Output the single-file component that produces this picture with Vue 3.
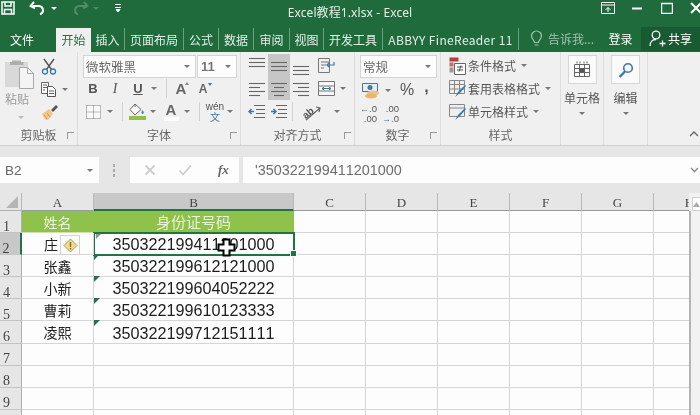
<script setup>
const tabs = [
  { t: '插入', c: 'w34' }, { t: '页面布局', c: 'w59' }, { t: '公式', c: 'w35' }, { t: '数据', c: 'w35' },
  { t: '审阅', c: 'w36' }, { t: '视图', c: 'w34' }, { t: '开发工具', c: 'w59' }, { t: 'ABBYY FineReader 11', c: 'w136' }
]
const cols = ['A', 'B', 'C', 'D', 'E', 'F', 'G', 'H']
const people = [
  ['姓名', '身份证号码'],
  ['庄', '350322199411201000'],
  ['张鑫', '350322199612121000'],
  ['小新', '350322199604052222'],
  ['曹莉', '350322199610123333'],
  ['凌熙', '350322199712151111'],
  ['', ''], ['', ''], ['', ''], ['', '']
]
const rows = people.map((p, i) => ({ n: i + 1, a: p[0], b: p[1], label: i < 9 ? i + 1 : '' }))
const alignIcons = [
  { on: false, l: [[1, 17, 2], [1, 17, 6], [1, 17, 10]] },
  { on: true, l: [[1, 17, 6], [1, 17, 10], [1, 17, 14]] },
  { on: false, l: [[1, 17, 10], [1, 17, 14], [1, 17, 18]] },
  { on: false, l: [[1, 17, 4], [1, 12, 8], [1, 17, 12], [1, 12, 16]] },
  { on: true, l: [[1, 17, 4], [4, 14, 8], [1, 17, 12], [4, 14, 16]] },
  { on: false, l: [[1, 17, 4], [6, 17, 8], [1, 17, 12], [6, 17, 16]] }
]
</script>

<template>
  <div class="app">
    <header class="title">
      <div class="qat">
        <svg class="q-save" width="14" height="14" viewBox="0 0 14 14"><path d="M1 1h12v12H1zM4 1v4h6V1M3.5 13V8.500h7V13" fill="none" stroke="#fff" stroke-width="1.500"/></svg>
        <svg class="q-undo" width="18" height="16" viewBox="0 0 18 16"><path d="M5 2 1.500 6 6 8.500M2.500 6H10a4.200 4.200 0 0 1 1 8.200" fill="none" stroke="#fff" stroke-width="2"/></svg>
        <i class="car white"></i>
        <svg class="q-redo" width="18" height="16" viewBox="0 0 18 16"><path d="M13 2l3.500 4L12 8.500M15.500 6H8a4.200 4.200 0 0 0-1 8.200" fill="none" stroke="#4f8c68" stroke-width="2"/></svg>
        <i class="car dim"></i>
        <svg class="q-more" width="8" height="10" viewBox="0 0 8 10"><path d="M1 1.500h6M1 4.500h6M2 6.500h4L4 9z" stroke="#fff" fill="#fff" stroke-width="1"/></svg>
      </div>
      <div class="doc">Excel教程1.xlsx - Excel</div>
      <div class="win">
        <svg width="14" height="12" viewBox="0 0 14 12"><path d="M.5.500h13v11H.500zM.5 3h13M4.500 8 7 5.500 9.500 8M7 5.500V10" fill="none" stroke="#fff"/></svg>
        <svg class="w-min" width="10" height="3" viewBox="0 0 10 3"><path d="M0 1.500h10" stroke="#fff" stroke-width="2"/></svg>
        <svg class="w-max" width="12" height="12" viewBox="0 0 12 12"><path d="M.5 1.500h11v10H.500z" fill="none" stroke="#fff" stroke-width="1.400"/></svg>
        <svg class="w-x" width="12" height="12" viewBox="0 0 12 12"><path d="M1 1l10 10M11 1 1 11" stroke="#fff" stroke-width="2"/></svg>
      </div>
    </header>

    <nav class="tabs">
      <span class="tab file">文件</span>
      <span class="tab active">开始</span>
      <span v-for="t in tabs" :key="t.t" class="tab sep" :class="t.c">{{ t.t }}</span>
      <span class="tell">
        <svg width="13" height="17" viewBox="0 0 13 17"><path d="M4.500 12.500C4 9.500 1.500 9 1.500 6a5 5 0 0 1 10 0c0 3-2.500 3.500-3 6.500zM4.500 15h4" fill="none" stroke="#9fc4ae" stroke-width="1.200"/></svg>
        告诉我...
      </span>
      <span class="login">登录</span>
      <span class="share">
        <svg width="17" height="17" viewBox="0 0 17 17"><circle cx="7" cy="5" r="3.800" fill="none" stroke="#fff" stroke-width="1.300"/><path d="M1 16c0-4 2.500-6.500 6-6.500M10.500 13.500h6M13.500 10.500v6" fill="none" stroke="#fff" stroke-width="1.300"/></svg>
        共享
      </span>
    </nav>

    <section class="ribbon">
      <div class="grp g-clip">
        <div class="body clip">
          <div class="paste">
            <svg width="30" height="32" viewBox="0 0 30 32">
              <rect x="0" y="3" width="23" height="25" fill="#d9d9d9"/>
              <path d="M7 3V1.500h9V3h2.500v3H5V3z" fill="#aeaeae"/>
              <path d="M14.500 8.500h8l6 6v15h-14z" fill="#f4f4f4" stroke="#a8a8a8"/>
              <path d="M22.500 8.500v6h6" fill="none" stroke="#a8a8a8"/>
            </svg>
            <span class="paste-t">粘贴</span>
            <i class="car pale"></i>
          </div>
          <div class="clip-tools">
            <svg width="16" height="17" viewBox="0 0 16 17"><path d="M3 1l7.500 10.500M13 1 5.500 11.500" stroke="#555" stroke-width="1.400" fill="none"/><circle cx="4" cy="13.500" r="2.500" fill="none" stroke="#3c78a8" stroke-width="1.300"/><circle cx="12" cy="13.500" r="2.500" fill="none" stroke="#3c78a8" stroke-width="1.300"/></svg>
            <span class="row-i">
              <svg width="16" height="15" viewBox="0 0 16 15"><path d="M.5.500h7v11h-7zM2 3h4M2 5.500h4M2 8h2" fill="#fafafa" stroke="#666"/><path d="M6.500 4.500h5l3 3v7h-8z" fill="#fafafa" stroke="#555"/><path d="M8 9h5M8 11.500h5" stroke="#666"/></svg>
              <i class="car after"></i>
            </span>
            <svg width="18" height="17" viewBox="0 0 18 17"><path d="M1 10 8 5l4 5-5 6c-2 .5-4-1-6-6z" fill="#f1c68b"/><path d="M3 11l3 4M6 9l3 4" stroke="#d99b4c"/><path d="M10 6l5-5 2 2-5 5z" fill="#555"/></svg>
          </div>
        </div>
        <div class="lab">剪贴板<i class="launch"></i></div>
      </div>

      <div class="grp g-font">
        <div class="body font">
          <div class="selects">
            <div class="sel fn">微软雅黑<i class="car"></i></div>
            <div class="sel fs">11<i class="car"></i></div>
          </div>
          <div class="frow">
            <b class="slot s20 bb">B</b>
            <em class="slot s24 ii">I</em>
            <u class="slot s22 uu">U</u>
            <span class="slot s10"><i class="car"></i></span>
            <span class="slot s14"><i class="vsep"></i></span>
            <span class="slot s16 aa big">A<i class="tri up"></i></span>
            <span class="slot s28 aa"><span class="small-a">A<i class="tri down"></i></span></span>
          </div>
          <div class="frow">
            <span class="slot s20"><svg width="15" height="14" viewBox="0 0 15 14"><path d="M.5.500h14v13H.500zM7.500.500v13M.5 7h14" fill="#fafafa" stroke="#777" stroke-dasharray="1 1"/></svg></span>
            <span class="slot s14"><i class="car"></i></span>
            <span class="slot s10"><i class="vsep"></i></span>
            <span class="slot s20 col">
              <svg width="16" height="13" viewBox="0 0 16 13"><path d="M6 1 1 6.500 6 12l6-5.500z" fill="#fafafa" stroke="#666"/><path d="M6 1V4" stroke="#666"/><path d="M13.500 7c1 1.500 1.500 2.500 1 3.500-1 .8-2 .3-2-.8 0-.7.500-1.700 1-2.700z" fill="#3c78a8"/></svg>
              <i class="swatch"></i>
            </span>
            <span class="slot s12"><i class="car"></i></span>
            <span class="slot s24 col color-a">A<i class="swatch wht"></i></span>
            <span class="slot s8"><i class="car"></i></span>
            <span class="slot s16"><i class="vsep"></i></span>
            <span class="slot s16 wen"><span>wén</span><strong>文</strong></span>
            <span class="slot s14"><i class="car"></i></span>
          </div>
        </div>
        <div class="lab">字体<i class="launch"></i></div>
      </div>

      <div class="grp g-align">
        <div class="body align">
          <div class="agrid">
            <span v-for="(ic, i) in alignIcons" :key="i" class="acell" :class="{ on: ic.on }">
              <svg width="18" height="20" viewBox="0 0 18 20"><path v-for="(l, j) in ic.l" :key="j" :d="`M${l[0]} ${l[2] + 0.5}H${l[1]}`" stroke="#666" stroke-width="1.100"/></svg>
            </span>
            <span class="acell">
              <svg width="17" height="15" viewBox="0 0 17 15"><path d="M3 4h8M3 7h5M3 10h3" stroke="#777"/><path d="M.5.500h11v14H.500z" fill="none" stroke="#777"/><path d="M16 4v3H9M11 5 9 7l2 2" fill="none" stroke="#3c78a8" stroke-width="1.200"/></svg>
            </span>
            <span class="acell">
              <svg width="17" height="15" viewBox="0 0 17 15"><path d="M.5.500h16v14H.500zM.5 5h16M.5 10h16" fill="#f8f8f8" stroke="#777"/><path d="M4 7.500h9M6 6 4 7.500 6 9M11 6l2 1.500L11 9" fill="none" stroke="#3c78a8"/></svg>
              <i class="car after"></i>
            </span>
            <span class="acell">
              <svg width="18" height="16" viewBox="0 0 18 16"><path d="M6 1.500h11M8 5.500h9M8 9.500h9M6 13.500h11" stroke="#666"/><path d="M6 7.500H1M3.500 5 1 7.500 3.500 10" fill="none" stroke="#3c78a8" stroke-width="1.500"/></svg>
            </span>
            <span class="acell">
              <svg width="18" height="16" viewBox="0 0 18 16"><path d="M6 1.500h11M8 5.500h9M8 9.500h9M6 13.500h11" stroke="#666"/><path d="M1 7.500h5M3.500 5 6 7.500 3.500 10" fill="none" stroke="#3c78a8" stroke-width="1.500"/></svg>
            </span>
            <span class="acell orient">
              <i class="vsep"></i>
              <svg width="24" height="18" viewBox="0 0 24 18"><text x="3" y="14" transform="rotate(-40 8 10)" class="ab">ab</text><path d="M7 17 21 5M17 4l4 1-1 4" fill="none" stroke="#666" stroke-width="1.200"/></svg>
              <i class="car after"></i>
            </span>
          </div>
        </div>
        <div class="lab">对齐方式<i class="launch"></i></div>
      </div>

      <div class="grp g-num">
        <div class="body num">
          <div class="sel gen">常规<i class="car"></i></div>
          <div class="frow nrow">
            <svg width="19" height="19" viewBox="0 0 19 19"><path d="M.5 2.500h15v8H.500z" fill="#e6eef5" stroke="#3c78a8"/><circle cx="8" cy="6.500" r="2.500" fill="#3c78a8"/><ellipse cx="11" cy="12" rx="6" ry="2.500" fill="#ecc384"/><ellipse cx="9" cy="15" rx="6" ry="2.500" fill="#e8b56a"/></svg>
            <i class="car"></i>
            <span class="pct">%</span>
            <span class="comma">,</span>
          </div>
          <div class="frow nrow dec">
            <span class="dbl"><span><i class="arr">←</i>.0</span><span>.00</span></span>
            <span class="dbl"><span>.00</span><span><i class="arr">→</i>.0</span></span>
          </div>
        </div>
        <div class="lab">数字<i class="launch"></i></div>
      </div>

      <div class="grp g-style">
        <div class="body styles">
          <div class="srow">
            <svg width="17" height="18" viewBox="0 0 17 18"><path d="M.5.500h9v4h-9z" fill="#b0413e"/><path d="M.5 5.500h4v4h-4z" fill="#c46c69"/><path d="M.5 10.500h4v5h-4z" fill="#999"/><path d="M5.500 6.500h11v11h-11z" fill="#fafafa" stroke="#666"/><path d="M8 10h6M8 13h6M12 8.500l-2 6" stroke="#555"/></svg>
            <span>条件格式</span><i class="car"></i>
          </div>
          <div class="srow">
            <svg width="17" height="18" viewBox="0 0 17 18"><path d="M.5.500h15v13H.500zM.5 4.500h15M.5 9h15M5.500.500v13M10.500.500v13" fill="#eee" stroke="#888"/><path d="M6 17l3-5 7-7 1 1-6 7z" fill="#3c78a8"/></svg>
            <span>套用表格格式</span><i class="car"></i>
          </div>
          <div class="srow">
            <svg width="17" height="18" viewBox="0 0 17 18"><path d="M.5 1.500h15v12H.500z" fill="#eee" stroke="#888"/><path d="M.5 5h15" stroke="#888"/><path d="M6 17l3-5 7-7 1 1-6 7z" fill="#3c78a8"/></svg>
            <span>单元格样式</span><i class="car"></i>
          </div>
        </div>
        <div class="lab">样式</div>
      </div>

      <div class="grp g-cell">
        <div class="body big-btn">
          <div class="bx">
            <svg width="16" height="17" viewBox="0 0 16 17"><path d="M3 .5v2M6 .5v2M10 .5v2M13 .5v2M.5 3.500h15v12H.500zM.5 7.500h15M.5 11.500h15M5.500 3.500v12M10.500 3.500v12" fill="none" stroke="#666"/><path d="M5.500 7.500h5v4h-5z" fill="#555"/></svg>
          </div>
          <span class="bt">单元格</span>
          <i class="car"></i>
        </div>
      </div>

      <div class="grp g-edit">
        <div class="body big-btn">
          <div class="bx">
            <svg width="16" height="16" viewBox="0 0 16 16"><circle cx="10" cy="6" r="4.300" fill="#f7f7f7" stroke="#3c78a8" stroke-width="1.600"/><path d="M7 9.500 1.500 15" stroke="#3c78a8" stroke-width="2.400"/></svg>
          </div>
          <span class="bt">编辑</span>
          <i class="car"></i>
        </div>
      </div>

      <div class="g-rest">
        <svg width="10" height="6" viewBox="0 0 10 6"><path d="M1 5l4-4 4 4" fill="none" stroke="#666" stroke-width="1.300"/></svg>
      </div>
    </section>

    <section class="fbar">
      <div class="name"><span>B2</span><i class="car"></i></div>
      <div class="dots"><i></i><i></i><i></i></div>
      <div class="fx">
        <svg width="12" height="12" viewBox="0 0 12 12"><path d="M1.500 1.500l9 9M10.500 1.500l-9 9" stroke="#ccc" stroke-width="1.800"/></svg>
        <svg width="14" height="12" viewBox="0 0 14 12"><path d="M1.500 6.500 5 10.500l8-9" fill="none" stroke="#ccc" stroke-width="1.800"/></svg>
        <em>fx</em>
      </div>
      <div class="input"><span>'350322199411201000</span>
        <svg width="9" height="6" viewBox="0 0 9 6"><path d="M1 1l3.500 3.500L8 1" fill="none" stroke="#888" stroke-width="1.300"/></svg>
      </div>
    </section>

    <section class="sheet">
      <div class="gridwrap">
        <div class="cgrid">
          <div class="hd corner"><svg width="12" height="12" viewBox="0 0 12 12"><path d="M12 0v12H0z" fill="#b5b5b5"/></svg></div>
          <div v-for="c in cols" :key="c" class="hd colh" :class="{ cur: c === 'B' }">{{ c }}</div>
          <template v-for="r in rows" :key="r.n">
            <div class="hd rowh" :class="{ cur: r.n === 2 }">{{ r.label }}</div>
            <div class="cell ca" :class="{ head: r.n === 1, tagged: r.n === 2 }">{{ r.a }}
              <span v-if="r.n === 2" class="tag"><svg width="15" height="15" viewBox="0 0 15 15"><path d="M7.500 1 14 7.500 7.500 14 1 7.500z" fill="#f4d98b" stroke="#b39a55"/><path d="M7.500 4v5M7.500 10v1.500" stroke="#7a6a3a" stroke-width="1.400"/></svg></span>
            </div>
            <div class="cell cb" :class="{ head: r.n === 1, 'head-b': r.n === 1, picked: r.n === 2, err: r.n > 2 && r.n < 7, errs: r.n === 2 }">{{ r.b }}
              <i v-if="r.n === 2" class="handle"></i>
              <svg v-if="r.n === 2" class="cross" width="19" height="19" viewBox="0 0 19 19"><path d="M6.500 1.500h6v5h5v6h-5v5h-6v-5h-5v-6h5z" fill="#fff" stroke="#000" stroke-width="2"/></svg>
            </div>
            <div v-for="k in 6" :key="k" class="cell"></div>
          </template>
        </div>
      </div>
      <aside class="vbar">
        <div class="vbtn"><svg width="7" height="5" viewBox="0 0 7 5"><path d="M3.500 0 7 5H0z" fill="#aaa"/></svg></div>
      </aside>
    </section>
  </div>
</template>

<style>
html, body { margin: 0; background: #e6e6e6; }
</style>

<style scoped>
.app { width: 700px; height: 415px; overflow: hidden; display: flex; flex-direction: column; background: #e8e8e8; font-family: "Noto Sans CJK SC", "Noto Sans", sans-serif; color: #555; font-size: 12px; filter: blur(0.3px); }
i { font-style: normal; display: block; }

.car { width: 0; height: 0; border-left: 3px solid transparent; border-right: 3px solid transparent; border-top: 3px solid #777; flex: none; }
.car.white { border-top-color: #fff; margin-left: 4px; }
.car.dim { border-top-color: #4f8c68; margin-left: 4px; }
.car.pale { border-top-color: #bbb; }
.car.after { margin-left: 5px; }

.title { height: 26px; flex: none; display: grid; grid-template-columns: 1fr auto 1fr; align-items: center; background: #1f6b3c; color: #fff; }
.qat { display: flex; align-items: center; padding: 0 0 12px 1px; }
.q-undo { margin-left: 14px; }
.q-redo { margin-left: 14px; }
.q-more { margin-left: 15px; }
.doc { font-size: 12px; letter-spacing: .1px; color: #e4efe8; font-family: "Noto Sans", "Noto Sans CJK SC", sans-serif; padding-bottom: 5px; }
.win { display: flex; align-items: center; justify-content: flex-end; padding-bottom: 12px; }
.w-min { margin-left: 17px; }
.w-max { margin-left: 19px; }
.w-x { margin: 0 -2px 0 17px; }

.tabs { height: 26px; flex: none; display: flex; align-items: flex-end; background: #1f6b3c; color: #e4efe8; font-size: 12px; }
.tab { height: 22px; margin-bottom: 2px; display: flex; align-items: center; justify-content: center; flex: none; white-space: nowrap; box-sizing: border-box; }
.tab.sep { border-right: 1px solid #6d9f80; }
.file { width: 44px; margin-right: 12px; color: #fff; }
.active { width: 35px; height: 24px; margin-bottom: 0; padding-bottom: 2px; background: #efefef; color: #2d6b45; }
.w34 { width: 34px; } .w35 { width: 35px; } .w36 { width: 36px; } .w59 { width: 59px; } .w136 { width: 136px; letter-spacing: .35px; }
.tell { width: 81px; height: 24px; padding-left: 11px; box-sizing: border-box; display: flex; align-items: center; gap: 5px; color: #9fc4ae; white-space: nowrap; font-size: 12px; margin-bottom: 2px; }
.login { width: 41px; height: 24px; display: flex; align-items: center; justify-content: center; color: #fff; margin-bottom: 2px; }
.share { width: 59px; height: 24px; margin-bottom: 1px; padding-bottom: 2px; box-sizing: border-box; background: #185a31; color: #fff; display: flex; align-items: center; justify-content: center; gap: 2px; }

.ribbon { height: 94px; flex: none; display: flex; background: #f0f0f0; border-bottom: 1px solid #cfcfcf; box-sizing: border-box; }
.grp { display: flex; flex-direction: column; flex: none; border-right: 1px solid #dcdcdc; box-sizing: border-box; }
.body { height: 73px; flex: none; box-sizing: border-box; padding-top: 3px; }
.lab { flex: 1; position: relative; display: flex; align-items: center; justify-content: center; color: #666; font-size: 12px; padding-bottom: 2px; }
.launch { position: absolute; right: 3px; bottom: 6px; width: 7px; height: 7px; border-left: 1px solid #999; border-top: 1px solid #999; box-sizing: border-box; }
.g-clip { width: 78px; } .g-font { width: 163px; } .g-align { width: 114px; } .g-num { width: 86px; } .g-style { width: 120px; } .g-cell { width: 43px; } .g-edit { width: 44px; }
.g-rest { flex: 1; display: flex; justify-content: flex-end; align-items: flex-end; padding: 0 1px 8px 0; }

.clip { display: flex; }
.paste { width: 41px; padding-left: 5px; box-sizing: border-box; display: flex; flex-direction: column; padding-top: 4px; }
.paste-t { color: #9a9a9a; font-size: 12px; margin-top: -1px; }
.paste .car { margin: 9px 0 0 13px; }
.clip-tools { display: flex; flex-direction: column; gap: 7px; padding-top: 3px; }
.row-i { display: flex; align-items: center; }

.font { padding-left: 5px; display: flex; flex-direction: column; padding-top: 3px; }
.selects { display: flex; gap: 1px; margin-bottom: 1px; }
.sel { height: 23px; background: #fdfdfd; border: 1px solid #d4d4d4; box-sizing: border-box; display: flex; align-items: center; justify-content: space-between; padding: 0 5px 0 2px; color: #666; font-size: 12.500px; }
.fn { width: 113px; } .fs { width: 40px; padding-left: 3px; font-family: "Liberation Sans", sans-serif; font-size: 13px; font-weight: 700; color: #777; }
.frow { display: flex; align-items: center; height: 19px; }
.frow + .frow { margin-top: 4px; }
.slot { display: flex; align-items: center; justify-content: center; flex: none; height: 100%; }
.s8 { width: 8px; } .s10 { width: 10px; } .s12 { width: 12px; } .s14 { width: 14px; } .s16 { width: 16px; } .s20 { width: 20px; } .s22 { width: 22px; } .s24 { width: 24px; } .s28 { width: 28px; }
.vsep { width: 1px; height: 19px; background: #d2d2d2; }
.bb, .uu { font-family: "Liberation Sans", sans-serif; font-size: 13px; color: #555; font-weight: 700; }
.ii { font-family: "Liberation Serif", serif; font-size: 14px; color: #555; }
.aa { font-family: "Liberation Sans", sans-serif; color: #666; position: relative; }
.big { font-size: 15px; font-weight: 700; }
.small-a { font-size: 12px; font-weight: 700; position: relative; }
.tri { position: absolute; width: 0; height: 0; border-left: 2.500px solid transparent; border-right: 2.500px solid transparent; }
.tri.up { right: 0; top: 3px; border-bottom: 3px solid #888; }
.tri.down { right: -5px; top: 1px; border-top: 3px solid #3c78a8; }
.col { flex-direction: column; }
.swatch { width: 17px; height: 4px; background: #8fc04c; }
.swatch.wht { background: #fdfdfd; width: 15px; }
.color-a { font-family: "Liberation Sans", sans-serif; font-size: 15px; font-weight: 700; color: #666; line-height: 15px; }
.wen { flex-direction: column; line-height: 10px; font-family: "Liberation Sans", sans-serif; font-size: 10px; color: #555; }
.wen strong { color: #3c78a8; font-weight: 400; font-family: "Noto Sans CJK SC", sans-serif; }

.align { padding-left: 5px; padding-top: 2px; }
.agrid { display: grid; grid-template-columns: 22px 22px 22px 28px; grid-auto-rows: 23px; grid-template-areas: "a b c w" "d e f m" "g h o o"; }
.acell { display: flex; align-items: center; justify-content: flex-start; padding-left: 2px; box-sizing: border-box; }
.acell:nth-child(1) { grid-area: a; } .acell:nth-child(2) { grid-area: b; } .acell:nth-child(3) { grid-area: c; }
.acell:nth-child(4) { grid-area: d; } .acell:nth-child(5) { grid-area: e; } .acell:nth-child(6) { grid-area: f; }
.acell:nth-child(7) { grid-area: w; padding-left: 6px; } .acell:nth-child(8) { grid-area: m; padding-left: 6px; width: 50px; }
.acell:nth-child(9) { grid-area: g; } .acell:nth-child(10) { grid-area: h; } .acell:nth-child(11) { grid-area: o; }
.acell.on { background: #c6c6c6; }
.orient { gap: 6px; }
.ab { font-family: "Liberation Sans", sans-serif; font-size: 10px; font-weight: 700; fill: #555; }

.num { padding-left: 5px; display: flex; flex-direction: column; }
.gen { width: 77px; font-size: 12.500px; margin-top: 0; }
.nrow { height: 23px; gap: 4px; padding-left: 2px; margin-top: 1px; }
.frow + .nrow { margin-top: 1px; }
.pct { font-family: "Liberation Sans", sans-serif; font-size: 16px; margin-left: 5px; color: #555; }
.comma { font-family: "Liberation Sans", sans-serif; font-size: 16px; font-weight: 700; margin: -6px 0 0 6px; color: #555; }
.nrow.dec { gap: 7px; }
.dbl { display: flex; flex-direction: column; align-items: flex-end; width: 15px; font-family: "Liberation Sans", sans-serif; font-size: 9.500px; line-height: 10px; color: #555; }
.dbl span { display: flex; white-space: nowrap; }
.arr { color: #3c78a8; font-size: 9px; }

.styles { padding: 4px 0 0 8px; display: flex; flex-direction: column; gap: 4px; }
.srow { display: flex; align-items: center; height: 19px; font-size: 12px; color: #555; gap: 2px; white-space: nowrap; }
.srow .car { margin-left: 3px; }

.big-btn { display: flex; flex-direction: column; align-items: center; height: 90px; padding-top: 3px; }
.bx { width: 29px; height: 29px; background: #fafafa; border: 1px solid #d6d6d6; box-sizing: border-box; display: flex; align-items: center; justify-content: center; flex: none; }
.bt { font-size: 12px; color: #555; margin-top: 5px; }
.big-btn .car { margin-top: 6px; }

.fbar { height: 47px; flex: none; display: flex; padding-top: 11px; box-sizing: border-box; background: #e6e6e6; }
.fbar > div { height: 26px; box-sizing: border-box; }
.name { width: 99px; background: #fdfdfd; display: flex; align-items: center; justify-content: space-between; padding: 0 6px 0 5px; font-family: "Liberation Sans", sans-serif; font-size: 13.500px; color: #666; }
.dots { width: 31px; display: flex; flex-direction: column; align-items: center; justify-content: center; gap: 2px; padding-right: 1px; }
.dots i { width: 2px; height: 3px; background: #aaa; }
.fx { width: 109px; background: #fdfdfd; display: flex; align-items: center; padding-left: 14px; gap: 22px; }
.fx em { font-family: "Liberation Serif", serif; font-weight: 700; font-size: 13px; color: #666; margin-left: 4px; }
.input { width: 457px; margin-left: 4px; background: #fdfdfd; display: flex; align-items: center; justify-content: space-between; padding: 0 1px 0 12px; font-family: "Liberation Sans", sans-serif; font-size: 14.400px; font-kerning: none; color: #6e6e6e; }

.sheet { flex: 1; display: flex; min-height: 0; overflow: hidden; background: #fdfdfd; }
.gridwrap { width: 689px; overflow: hidden; flex: none; }
.cgrid { display: grid; grid-template-columns: 22px 72px 200px repeat(6, 72px); grid-template-rows: 18px repeat(10, 22.100px); width: 726px; }
.hd { background: #e6e6e6; box-sizing: border-box; font-family: "Liberation Serif", serif; color: #444; font-size: 13px; display: flex; align-items: center; justify-content: center; }
.corner { justify-content: flex-end; align-items: flex-end; padding: 0 3px 2px 0; border-right: 1px solid #b8b8b8; border-bottom: 1px solid #b0b0b0; }
.colh { border-right: 1px solid #b8b8b8; border-bottom: 1px solid #9a9a9a; padding-top: 3px; }
.colh.cur { background: #c8c8c8; border-bottom: 2px solid #217346; }
.rowh { border-right: 1px solid #b0b0b0; border-bottom: 1px solid #c4c4c4; padding: 10px 8px 0 0; line-height: 12px; font-size: 14px; overflow: hidden; }
.rowh.cur { background: #c8c8c8; border-right: 2px solid #217346; }
.cell { box-sizing: border-box; border-right: 1px solid #d6d6d6; border-bottom: 1px solid #d6d6d6; position: relative; background: #fdfdfd; display: flex; align-items: center; justify-content: center; color: #222; }
.ca { font-size: 14px; font-family: "Noto Sans CJK SC", sans-serif; }
.cb { font-size: 16.200px; font-family: "Liberation Sans", sans-serif; font-kerning: none; color: #1d1d1d; padding-top: 2px; }
.head { background: #8fc24a; color: #e9f3da; font-family: "Noto Sans CJK SC", sans-serif; font-size: 14px; border-right-color: #8fc24a; border-bottom-color: #cfe3b0; padding-top: 0; }
.head-b { font-size: 15px; }
.tagged { justify-content: flex-start; padding-left: 22px; z-index: 2; overflow: visible; }
.tag { position: absolute; left: 38px; top: 2px; width: 20px; height: 20px; background: #fbfbfb; border: 1px solid #d2d2d2; box-sizing: border-box; display: flex; align-items: center; justify-content: center; }
.picked { outline: 2px solid #217346; outline-offset: -1px; z-index: 1; overflow: visible; }
.err::before, .errs::before { content: ""; position: absolute; left: 0; top: -1px; width: 0; height: 0; border-top: 6px solid #217346; border-right: 6px solid transparent; }
.errs::before { left: 2px; top: 1px; border-top-width: 5px; border-right-width: 5px; border-top-color: #7f9f8c; }
.handle { position: absolute; right: -4px; bottom: -3px; background: #217346; border: 1px solid #fff; z-index: 3; width: 5px; height: 5px; }
.cross { position: absolute; left: 123px; top: 5px; z-index: 4; }

.vbar { flex: 1; padding-top: 4px; background: linear-gradient(#b5b5b5, #b5b5b5) 0 18px / 2px 100% no-repeat, #f2f2f2; }
.vbtn { margin: 0 0 0 3px; height: 14px; background: #fdfdfd; border: 1px solid #cfcfcf; display: flex; align-items: center; justify-content: center; box-sizing: border-box; }
</style>
